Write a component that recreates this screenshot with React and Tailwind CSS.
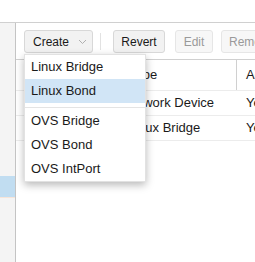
export default function App() {
  const items1 = ["Linux Bridge", "Linux Bond"];
  const items2 = ["OVS Bridge", "OVS Bond", "OVS IntPort"];
  return (
    <div className="relative w-[255px] h-[262px] overflow-hidden bg-white text-[#1a1a1a] font-['Liberation_Sans',Arial,sans-serif]">
      <div className="h-[23px] bg-white border-b border-[#d0d0d0]" />
      <div className="flex h-[239px]">
        <div className="w-[16px] shrink-0 bg-[#f4f4f4] border-r border-[#c4c4c4] flex flex-col">
          <div className="h-[153px]" />
          <div className="h-[21px] bg-[#c1ddf1]" />
          <div className="h-[1px] bg-[#f6e4d8]" />
        </div>
        <div className="flex-1 flex flex-col min-w-0">
          <div className="h-[36px] flex items-start pt-[7px] pl-[8px] whitespace-nowrap text-[12px]">
            <div className="h-[23px] w-[69px] shrink-0 flex items-center pl-[8px] gap-[9px] rounded-[3px] border border-[#d8d8d8] bg-[#f2f2f2]">
              <span>Create</span>
              <svg width="9" height="6" viewBox="0 0 9 6">
                <polyline points="1,1 4.5,4.5 8,1" fill="none" stroke="#b0b0b0" strokeWidth="1" />
              </svg>
            </div>
            <div className="w-[1px] h-[17px] mt-[3px] ml-[7px] bg-[#e2e2e2] shrink-0" />
            <div className="h-[23px] w-[52px] ml-[12px] shrink-0 flex items-center justify-center rounded-[3px] border border-[#d8d8d8] bg-[#f2f2f2]">
              Revert
            </div>
            <div className="h-[23px] w-[38px] ml-[10px] shrink-0 flex items-center justify-center rounded-[3px] border border-[#e6e6e6] bg-[#f7f7f7] text-[#9a9a9a]">
              Edit
            </div>
            <div className="h-[23px] w-[60px] ml-[8px] shrink-0 flex items-center pl-[7px] rounded-[3px] border border-[#e6e6e6] bg-[#f7f7f7] text-[#9a9a9a]">
              Remove
            </div>
          </div>
          <div className="border-t border-[#d0d0d0] text-[13px] whitespace-nowrap">
            <div className="flex h-[30px] items-center">
              <div className="w-[220px] shrink-0 pl-[113px]">Type</div>
              <div className="h-full border-l border-[#d0d0d0] pl-[9px] flex items-center">Active</div>
            </div>
            <div className="flex h-[25px] items-center border-t border-[#ececec]">
              <div className="w-[220px] shrink-0 pl-[107px]">Network Device</div>
              <div className="pl-[10px]">Yes</div>
            </div>
            <div className="flex h-[26px] items-center border-t border-b border-[#ececec]">
              <div className="w-[220px] shrink-0 pl-[112px]">Linux Bridge</div>
              <div className="pl-[10px]">Yes</div>
            </div>
          </div>
        </div>
      </div>
      <div className="absolute left-[24px] top-[54px] w-[122px] bg-white border border-[#e2e2e2] shadow-[0_3px_8px_rgba(0,0,0,0.28)] text-[13px] whitespace-nowrap">
        <div className="h-[24px] flex items-center pl-[6px]">{items1[0]}</div>
        <div className="h-[24px] flex items-center pl-[6px] bg-[#d1e5f6]">{items1[1]}</div>
        <div className="h-[6px] flex items-center">
          <div className="w-full h-[1px] bg-[#e4e4e4] mt-[2px]" />
        </div>
        {items2.map((t) => (
          <div key={t} className="h-[24px] flex items-center pl-[6px]">{t}</div>
        ))}
      </div>
    </div>
  );
}
